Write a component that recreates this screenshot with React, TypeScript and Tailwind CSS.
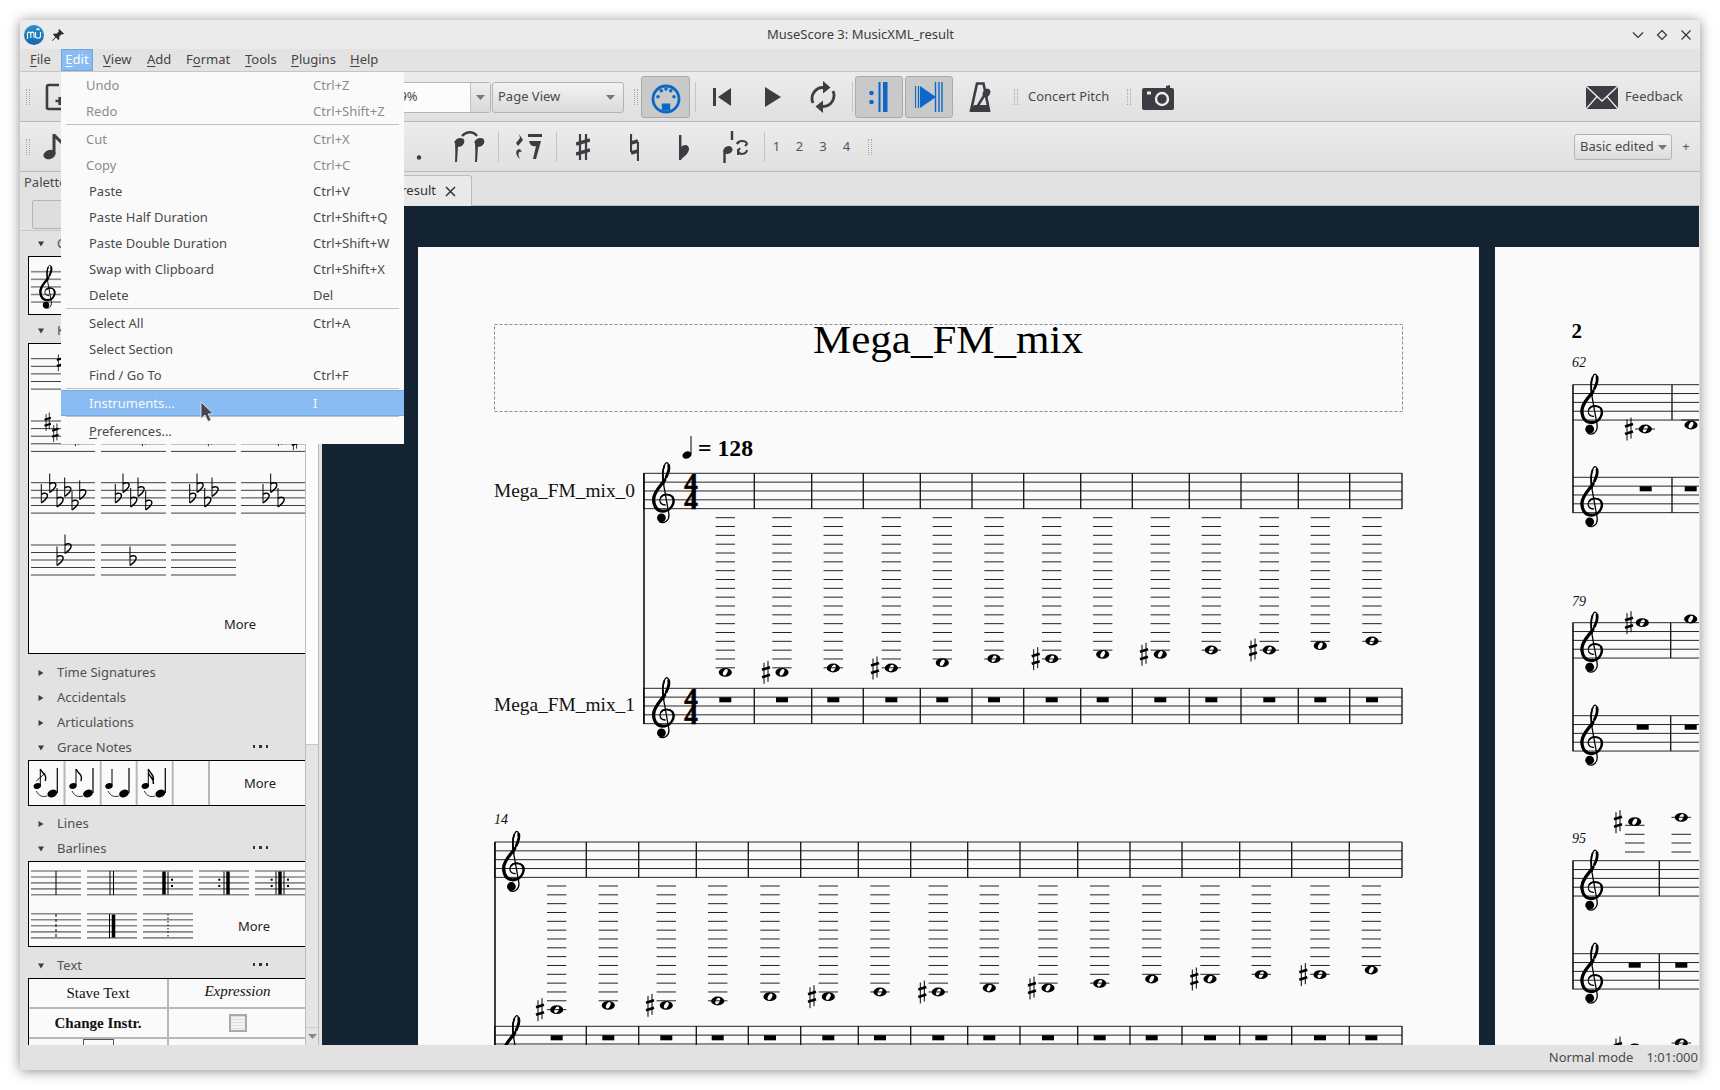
import React from "react";

const INK = "#3b3d43";
const BLUE = "#0b68c6";
const SP = 8.84;
const SERIF = "font-['Liberation_Serif',serif]";

function Clef({ x, y, s = 1 }: { x: number; y: number; s?: number }) {
  return (
    <g transform={`translate(${x} ${y}) scale(${s})`} fill="none" stroke="#000" strokeLinecap="round">
      <path strokeWidth="1.3" d="M13.5 44 C9 44 7 40 9 36.5 C11 33 18 32 21 36 C24 41 20 49 13 50 C6 51 1 46 1.2 38 C1.5 30 9 25 13 19 C16 14 18.5 9 17 4 C16 0.5 14 1 12.5 5 C10.5 10 11 17 12 24 L17 52 C18.5 60 12 63 8 61" />
      <path strokeWidth="3.2" d="M13 50 C6 51 1.8 46 2 38 C2.2 30.5 9 25 13 19" />
      <path strokeWidth="2.8" d="M14.5 16 C16.5 12 18 8.5 17 4.5" />
      <path strokeWidth="2.4" d="M21 36.5 C23.5 41 20 49 13.5 50" />
      <path strokeWidth="1.8" d="M12 23 C11 17 10.5 10 12.5 5 M9.5 36 C11 33.5 17 32.5 20.5 35.5" />
      <circle cx="9.7" cy="56.8" r="4.4" fill="#000" stroke="none" />
    </g>
  );
}

function Staff({ x1, x2, y, sp = SP, c = "#262626", w = 1 }: { x1: number; x2: number; y: number; sp?: number; c?: string; w?: number }) {
  return (
    <g stroke={c} strokeWidth={w}>
      {[0, 1, 2, 3, 4].map((i) => (
        <line key={i} x1={x1} x2={x2} y1={y + i * sp} y2={y + i * sp} />
      ))}
    </g>
  );
}

function Sharp({ x, y, s = 1 }: { x: number; y: number; s?: number }) {
  return (
    <g transform={`translate(${x} ${y}) scale(${s})`} stroke="#000">
      <line x1="-2" x2="-2" y1="-9.5" y2="11.5" strokeWidth="1" />
      <line x1="2" x2="2" y1="-11.5" y2="9.5" strokeWidth="1" />
      <line x1="-4" x2="4" y1="-2.5" y2="-5" strokeWidth="2.6" />
      <line x1="-4" x2="4" y1="5" y2="2.5" strokeWidth="2.6" />
    </g>
  );
}

function Flat({ x, y }: { x: number; y: number }) {
  return (
    <g transform={`translate(${x} ${y})`} fill="none" stroke="#000">
      <line x1="0" x2="0" y1="-13" y2="6" strokeWidth="1" />
      <path strokeWidth="1.4" d="M0 -2.5 C3 -5 6.8 -3.5 6 -0.5 C5.2 2 2 4.5 0 6" />
    </g>
  );
}

function Whole({ x, y }: { x: number; y: number }) {
  return (
    <path
      transform={`translate(${x} ${y})`}
      fill="#000"
      fillRule="evenodd"
      d="M-6.6 0 A6.6 4.4 0 1 1 6.6 0 A6.6 4.4 0 1 1 -6.6 0 Z M-1.7 2.95 A3.4 1.9 -60 1 1 1.7 -2.95 A3.4 1.9 -60 1 1 -1.7 2.95 Z"
    />
  );
}

type N = [number, number, number?];

function Bars({ xs, y1, y2 }: { xs: number[]; y1: number; y2: number }) {
  return (
    <g stroke="#111" strokeWidth="1.3">
      {xs.map((x) => (
        <line key={x} x1={x} x2={x} y1={y1} y2={y2} />
      ))}
    </g>
  );
}

function LedgerNote({ n, top }: { n: N; top: number }) {
  const [x, y, sharp] = n;
  const lines: number[] = [];
  for (let k = 0; top + k * 8.83 <= y + 1; k++) lines.push(top + k * 8.83);
  return (
    <g>
      {lines.map((ly) => (
        <line key={ly} x1={x - 9.7} x2={x + 9.7} y1={ly} y2={ly} stroke="#222" strokeWidth="1" />
      ))}
      <Whole x={x} y={y} />
      {sharp ? <Sharp x={sharp} y={y} /> : null}
    </g>
  );
}

function Rest({ x, y }: { x: number; y: number }) {
  return <rect x={x - 6} y={y} width="12" height="5" fill="#000" />;
}

const sys1Bars = [643.7, 754.3, 811.7, 863.3, 920.3, 972, 1023.7, 1080.7, 1132.3, 1189.3, 1241, 1298.3, 1349.7, 1402];
const sys1Notes: N[] = [
  [725.3, 672.3], [782, 672.3, 766], [833.3, 668], [891.3, 668, 875], [942.3, 662.7], [994, 658.7],
  [1051.7, 658.7, 1035.7], [1102.7, 654.3], [1160.3, 654.3, 1144], [1211.3, 650], [1269.3, 650, 1253], [1320.3, 645.7], [1372, 641],
];
const sys2Bars = [494.7, 586.3, 638.7, 696.3, 748.3, 800.7, 858.3, 910.7, 967.7, 1020, 1077.7, 1130, 1182, 1239.7, 1291.7, 1349.3, 1402];
const sys2Notes: N[] = [
  [556.7, 1009.7, 540], [608.3, 1005.3], [666.3, 1005.3, 650], [717.7, 1001], [770, 996.7], [828.3, 996.7, 812], [880, 992], [938.3, 992, 922.3],
  [989.3, 988], [1048, 988, 1032], [1099.7, 983.3], [1151.7, 979], [1210, 979, 1194.3], [1261.3, 974.7], [1320, 974.7, 1303.3], [1371.3, 970],
];

function PageOne() {
  return (
    <svg viewBox="418 247 1061 800" className="block w-[1061px] h-[800px]">
      <rect x="494.5" y="324.5" width="908" height="87" fill="none" stroke="#8c8c8c" strokeWidth="1" strokeDasharray="3 2" />
      <text x="948" y="353" textAnchor="middle" fontSize="40" fill="#000" textLength="270" lengthAdjust="spacingAndGlyphs" className={SERIF}>Mega_FM_mix</text>

      <ellipse cx="687" cy="455" rx="4.7" ry="3.6" transform="rotate(-22 687 455)" fill="#000" />
      <line x1="691" x2="691" y1="436" y2="454" stroke="#000" strokeWidth="1" />
      <text x="698" y="456" fontSize="23" fontWeight="700" fill="#000" textLength="55" lengthAdjust="spacingAndGlyphs" className={SERIF}>= 128</text>

      <text x="494" y="497" fontSize="19" fill="#111" textLength="141" lengthAdjust="spacingAndGlyphs" className={SERIF}>Mega_FM_mix_0</text>
      <text x="494" y="711" fontSize="19" fill="#111" textLength="141" lengthAdjust="spacingAndGlyphs" className={SERIF}>Mega_FM_mix_1</text>

      <Staff x1={643.7} x2={1402} y={473.3} />
      <Staff x1={643.7} x2={1402} y={688.3} />
      <Bars xs={sys1Bars} y1={473} y2={509} />
      <Bars xs={sys1Bars} y1={688} y2={724} />
      <line x1="644" x2="644" y1="473" y2="724" stroke="#111" strokeWidth="1.6" />
      <Clef x={651.7} y={461} />
      <Clef x={651.7} y={676} />
      {[491.5, 509, 706.5, 724].map((y) => (
        <text key={y} x="691" y={y} textAnchor="middle" fontSize="27" fontWeight="700" fill="#000" stroke="#000" strokeWidth="0.7" className={SERIF}>4</text>
      ))}
      {sys1Notes.map((n) => (
        <g key={n[0]}>
          <LedgerNote n={n} top={517.7} />
          <Rest x={n[0]} y={697.3} />
        </g>
      ))}

      <text x="494" y="824" fontSize="14" fontStyle="italic" fill="#111" className={SERIF}>14</text>
      <Staff x1={494.7} x2={1402} y={842} />
      <Staff x1={494.7} x2={1402} y={1026.3} />
      <Bars xs={sys2Bars} y1={842} y2={877.5} />
      <Bars xs={sys2Bars} y1={1026} y2={1047} />
      <line x1="495" x2="495" y1="842" y2="1047" stroke="#111" strokeWidth="1.6" />
      <Clef x={501.7} y={829.7} />
      <Clef x={501.7} y={1014} />
      {sys2Notes.map((n) => (
        <g key={n[0]}>
          <LedgerNote n={n} top={886} />
          <Rest x={n[0]} y={1035.3} />
        </g>
      ))}
    </svg>
  );
}

function MiniSystem({ t1, t2, bar, num, numY, rests }: { t1: number; t2: number; bar: number; num: string; numY: number; rests: number[] }) {
  return (
    <g>
      <text x="1572" y={numY} fontSize="14" fontStyle="italic" fill="#111" className={SERIF}>{num}</text>
      <Staff x1={1572.5} x2={1700} y={t1} />
      <Staff x1={1572.5} x2={1700} y={t2} />
      <Bars xs={[bar]} y1={t1} y2={t1 + 35.4} />
      <Bars xs={[bar]} y1={t2} y2={t2 + 35.4} />
      <line x1="1573" x2="1573" y1={t1} y2={t2 + 35.4} stroke="#111" strokeWidth="1.6" />
      <Clef x={1580} y={t1 - 12.3} />
      <Clef x={1580} y={t2 - 12.3} />
      {rests.map((x) => (
        <Rest key={x} x={x} y={t2 + 9} />
      ))}
    </g>
  );
}

function PageTwo() {
  return (
    <svg viewBox="1495 247 204 800" className="block w-[204px] h-[800px]">
      <text x="1571.5" y="338" fontSize="21" fontWeight="700" fill="#000" className={SERIF}>2</text>
      <MiniSystem t1={384.7} t2={477.3} bar={1672} num="62" numY={367} rests={[1645.7, 1690.7]} />
      <line x1="1635" x2="1655" y1="429" y2="429" stroke="#222" />
      <Whole x={1645.3} y={429} />
      <Sharp x={1629} y={429} />
      <line x1="1681" x2="1700" y1="420" y2="420" stroke="#222" />
      <Whole x={1691} y={425} />

      <MiniSystem t1={622.7} t2={715.7} bar={1670.7} num="79" numY={605.7} rests={[1642.7, 1690.7]} />
      <Whole x={1642.3} y={622.7} />
      <Sharp x={1629} y={622.7} />
      <Whole x={1690.7} y={619} />

      <MiniSystem t1={860.7} t2={953.7} bar={1659.3} num="95" numY={843.3} rests={[1634.7, 1681.3]} />
      {[825.3, 834.3, 843, 852].map((y) => (
        <line key={y} x1="1625" x2="1644.5" y1={y} y2={y} stroke="#222" />
      ))}
      {[817.3, 834.3, 843, 852].map((y) => (
        <line key={y} x1="1671.5" x2="1691" y1={y} y2={y} stroke="#222" />
      ))}
      <Whole x={1634.7} y={821.7} />
      <Sharp x={1618} y={821.7} />
      <Whole x={1681.3} y={817.3} />
      <Whole x={1634.7} y={1048} />
      <Sharp x={1618} y={1048} />
      <Whole x={1681.3} y={1043} />
      <line x1="1671.5" x2="1691" y1="1043" y2="1043" stroke="#222" />
    </svg>
  );
}

function Grip() {
  return <div className="w-[4px] h-[16px] border-x border-dotted border-[#a8a8a8] shrink-0" />;
}
function Sep() {
  return <div className="w-px h-[30px] bg-[#c4c4c4] shrink-0" />;
}
function Caret({ c = "#777" }: { c?: string }) {
  return (
    <svg width="9" height="5" viewBox="0 0 9 5" className="shrink-0">
      <path d="M0 0H9L4.5 5Z" fill={c} />
    </svg>
  );
}

function U({ pre = "", k, post }: { pre?: string; k: string; post: string }) {
  return (
    <span>
      {pre}
      <span className="underline underline-offset-[2px]">{k}</span>
      {post}
    </span>
  );
}

function TitleBar() {
  return (
    <div className="h-[29px] bg-[#ebebeb] flex items-center relative shrink-0">
      <svg width="20" height="20" viewBox="0 0 20 20" className="ml-[4px] shrink-0">
        <defs>
          <linearGradient id="mu" x1="0" y1="0" x2="0" y2="1">
            <stop offset="0" stopColor="#2b8fcf" />
            <stop offset="1" stopColor="#1668a8" />
          </linearGradient>
        </defs>
        <circle cx="10" cy="10" r="10" fill="url(#mu)" />
        <path d="M3.5 14V8.8C3.5 6.5 6.8 6.5 6.8 8.8V13M6.8 8.8C6.8 6.5 10 6.5 10 8.8V13" fill="none" stroke="#fff" strokeWidth="1.1" />
        <path d="M11.5 7V11C11.5 14 16.5 14 16.5 11V7M12.5 5L14 3.5L15.5 5" fill="none" stroke="#fff" strokeWidth="1.1" />
      </svg>
      <svg width="14" height="14" viewBox="0 0 14 14" className="ml-[7px] shrink-0">
        <path d="M8.2 1L13 5.8L11.8 6.6L10.6 6.2L8.2 8.6L8.4 11L7.4 12L5 9.6L1.5 13L1 12.5L4.4 9L2 6.6L3 5.6L5.4 5.8L7.8 3.4L7.4 2.2Z" fill="#2c2c2c" />
      </svg>
      <div className="flex-1 text-center text-[13px] text-[#3c3c3c] pl-[24px]">MuseScore 3: MusicXML_result</div>
      <div className="flex items-center gap-[12px] pr-[8px]">
        <svg width="12" height="12" viewBox="0 0 12 12"><path d="M1 3.5L6 8.5L11 3.5" fill="none" stroke="#333" strokeWidth="1.2" /></svg>
        <svg width="12" height="12" viewBox="0 0 12 12"><path d="M6 1.5L10.5 6L6 10.5L1.5 6Z" fill="none" stroke="#333" strokeWidth="1.2" /></svg>
        <svg width="12" height="12" viewBox="0 0 12 12"><path d="M1.5 1.5L10.5 10.5M10.5 1.5L1.5 10.5" fill="none" stroke="#333" strokeWidth="1.2" /></svg>
      </div>
    </div>
  );
}

function MenuBar() {
  return (
    <div className="h-[23px] bg-[#e3e3e3] border-b border-[#c6c6c6] flex items-center text-[13px] text-[#444] shrink-0">
      <div className="ml-[10px] w-[31px]"><U k="F" post="ile" /></div>
      <div className="w-[32px] h-[22px] bg-[#88bcf3] border border-[#6ea6de] text-white flex items-center justify-center"><U k="E" post="dit" /></div>
      <div className="ml-[10px] w-[44px]"><U k="V" post="iew" /></div>
      <div className="w-[39px]"><U k="A" post="dd" /></div>
      <div className="w-[59px]"><U pre="F" k="o" post="rmat" /></div>
      <div className="w-[46px]"><U k="T" post="ools" /></div>
      <div className="w-[59px]"><U k="P" post="lugins" /></div>
      <div><U k="H" post="elp" /></div>
    </div>
  );
}

function IconDoc() {
  return (
    <svg width="20" height="30" viewBox="0 0 20 30" className="shrink-0">
      <path d="M14 3H3.5A1.5 1.5 0 0 0 2 4.5V25.5A1.5 1.5 0 0 0 3.5 27H18" fill="none" stroke={INK} strokeWidth="2.6" />
      <path d="M10.5 19H19M14.7 15V23" stroke={INK} strokeWidth="2.6" />
    </svg>
  );
}
function IconMidi() {
  return (
    <svg width="32" height="32" viewBox="-16 -16 32 32" className="shrink-0 mt-[3px]">
      <circle r="13" fill="none" stroke={BLUE} strokeWidth="2.8" />
      <rect x="-4.2" y="4.5" width="8.4" height="7" fill={BLUE} />
      {[[-8, -2.3], [-4.7, -8.3], [0, -10], [4.7, -8.3], [8, -2.3]].map(([x, y]) => (
        <circle key={x} cx={x} cy={y} r="1.8" fill={BLUE} />
      ))}
    </svg>
  );
}
function IconRewind() {
  return (
    <svg width="18" height="18" viewBox="0 0 18 18" className="shrink-0">
      <rect x="0" y="0" width="3" height="18" fill={INK} />
      <path d="M5 9L18 0V18Z" fill={INK} />
    </svg>
  );
}
function IconPlay() {
  return (
    <svg width="16" height="20" viewBox="0 0 16 20" className="shrink-0">
      <path d="M0 0L16 10L0 20Z" fill={INK} />
    </svg>
  );
}
function IconLoop() {
  return (
    <svg width="26" height="32" viewBox="0 0 26 32" className="shrink-0">
      <path d="M3 22A11 11 0 0 1 13 6.5H15M23 10A11 11 0 0 1 13 25.5H11" fill="none" stroke={INK} strokeWidth="2.8" />
      <path d="M13 0L20.5 6.5L13 12.5ZM13 19.5L5.5 25.5L13 32Z" fill={INK} />
    </svg>
  );
}
function IconRepeat() {
  return (
    <svg width="20" height="30" viewBox="0 0 20 30" className="shrink-0">
      <circle cx="2.5" cy="11" r="2.3" fill={BLUE} />
      <circle cx="2.5" cy="20" r="2.3" fill={BLUE} />
      <rect x="9.5" y="0" width="2" height="30" fill={BLUE} />
      <rect x="14" y="0" width="4.5" height="30" fill={BLUE} />
    </svg>
  );
}
function IconNext() {
  return (
    <svg width="28" height="30" viewBox="0 0 28 30" className="shrink-0">
      <path d="M0.5 4V26M3.5 4V26" stroke={BLUE} strokeWidth="1.2" />
      <path d="M5 4L21 15L5 26Z" fill={BLUE} />
      <path d="M20.5 0V30M24 0V30M27 0V30" stroke={BLUE} strokeWidth="1.4" />
    </svg>
  );
}
function IconMetro() {
  return (
    <svg width="23" height="30" viewBox="0 0 23 30" className="shrink-0">
      <path d="M8 1.5H14.5L20 28.5H2Z" fill="none" stroke={INK} strokeWidth="2.6" />
      <path d="M5 23H18L21 30H1Z" fill={INK} />
      <path d="M8 25L18 9" stroke={INK} strokeWidth="2.4" />
      <ellipse cx="17.5" cy="11" rx="3.5" ry="4.5" fill={INK} transform="rotate(30 17.5 11)" />
    </svg>
  );
}
function IconCamera() {
  return (
    <svg width="32" height="25" viewBox="0 0 32 25" className="shrink-0">
      <path d="M2 3H24V1L28 0V3H30A2 2 0 0 1 32 5V23A2 2 0 0 1 30 25H2A2 2 0 0 1 0 23V5A2 2 0 0 1 2 3Z" fill={INK} />
      <rect x="5" y="6.5" width="4" height="3" fill="#eee" />
      <circle cx="20" cy="14" r="6" fill="none" stroke="#eee" strokeWidth="2.4" />
    </svg>
  );
}
function IconMail() {
  return (
    <svg width="32" height="23" viewBox="0 0 32 23" className="shrink-0">
      <rect width="32" height="23" fill={INK} />
      <path d="M0 0L16 15L32 0M0 23L11 10.5M32 23L21 10.5" fill="none" stroke="#efefef" strokeWidth="1.3" />
    </svg>
  );
}

function Toolbar1() {
  return (
    <div className="h-[50px] pt-[1px] bg-gradient-to-b from-[#ececec] to-[#e0e0e0] border-b border-[#b9b9b9] flex items-center text-[13px] text-[#4a4a4a] shrink-0">
      <div className="ml-[6px]"><Grip /></div>
      <div className="ml-[15px]"><IconDoc /></div>
      <div className="ml-[320px] w-[106px] h-[31px] bg-[#fcfcfc] border border-[#b4b4b4] rounded-[3px] flex items-center shrink-0">
        <div className="flex-1 pl-[6px]">99%</div>
        <div className="w-[20px] h-full border-l border-[#c2c2c2] bg-gradient-to-b from-[#eeeeee] to-[#d8d8d8] flex items-center justify-center"><Caret /></div>
      </div>
      <div className="ml-px w-[132px] h-[31px] bg-gradient-to-b from-[#f4f4f4] to-[#dadada] border border-[#b4b4b4] rounded-[3px] flex items-center justify-between pl-[5px] pr-[8px] shrink-0">
        <span>Page View</span>
        <Caret />
      </div>
      <div className="ml-[10px]"><Grip /></div>
      <div className="ml-[3px] w-[49px] h-[42px] bg-[#c9c9c9] border border-[#ababab] rounded-[3px] flex items-center justify-center shrink-0"><IconMidi /></div>
      <div className="ml-[5px]"><Sep /></div>
      <div className="w-[51px] flex justify-center shrink-0"><IconRewind /></div>
      <div className="w-[51px] flex justify-center shrink-0"><IconPlay /></div>
      <div className="w-[49px] flex justify-center shrink-0"><IconLoop /></div>
      <div className="ml-[5px]"><Sep /></div>
      <div className="ml-[2px] w-[48px] h-[42px] bg-[#c9c9c9] border border-[#ababab] rounded-[3px] flex items-center justify-center shrink-0"><IconRepeat /></div>
      <div className="ml-[2px] w-[48px] h-[42px] bg-[#c9c9c9] border border-[#ababab] rounded-[3px] flex items-center justify-center shrink-0"><IconNext /></div>
      <div className="w-[54px] flex justify-center shrink-0"><IconMetro /></div>
      <div className="ml-[7px]"><Grip /></div>
      <div className="ml-[10px] w-[82px] whitespace-nowrap shrink-0">Concert Pitch</div>
      <div className="ml-[17px]"><Grip /></div>
      <div className="w-[54px] flex justify-center shrink-0"><IconCamera /></div>
      <div className="flex-1" />
      <IconMail />
      <div className="ml-[7px] mr-[17px]">Feedback</div>
    </div>
  );
}

function Toolbar2() {
  return (
    <div className="h-[50px] pt-[1px] bg-gradient-to-b from-[#ececec] to-[#e0e0e0] border-b border-[#b9b9b9] flex items-center text-[13px] text-[#555] shrink-0">
      <div className="ml-[6px]"><Grip /></div>
      <svg width="22" height="26" viewBox="0 0 22 26" className="ml-[12px] shrink-0">
        <ellipse cx="7.5" cy="20.5" rx="6.2" ry="4.6" fill={INK} transform="rotate(-20 7.5 20.5)" />
        <path d="M12 20V1L22 11" fill="none" stroke={INK} strokeWidth="3" />
      </svg>
      <div className="ml-[336px] w-[38px] flex justify-center shrink-0">
        <svg width="6" height="28" viewBox="0 0 6 28"><circle cx="3" cy="24.5" r="2.2" fill={INK} /></svg>
      </div>
      <div className="w-[60px] flex justify-center shrink-0">
        <svg width="38" height="32" viewBox="0 0 38 32">
          <path d="M6 12A6 6 0 0 1 12 8C14 8 15 10 14 12C13 14 10 15 8 15L7 31M26 12A6 6 0 0 1 32 8C34 8 35 10 34 12C33 14 30 15 28 15L27 31" fill={INK} stroke={INK} strokeWidth="2" />
          <path d="M13 5C18 0 24 0 28 5" fill="none" stroke={INK} strokeWidth="2.4" />
        </svg>
      </div>
      <Sep />
      <div className="w-[57px] flex justify-center shrink-0">
        <svg width="28" height="28" viewBox="0 0 28 28">
          <path d="M5 1L9 7L4 13L8 19C5 18 3 20 6 26C0 21 2 16 6 16L2 10L6 5Z" fill={INK} />
          <rect x="14" y="1" width="14" height="3" fill={INK} />
          <path d="M15 8H27L22 26H19L22 13C20 14 16 13 15 8Z" fill={INK} />
        </svg>
      </div>
      <Sep />
      <div className="w-[52px] flex justify-center shrink-0">
        <svg width="14" height="26" viewBox="0 0 14 26">
          <path d="M4 0V26M10 0V26" stroke={INK} strokeWidth="2.2" />
          <path d="M0 10L14 6M0 20L14 16" stroke={INK} strokeWidth="3.4" />
        </svg>
      </div>
      <div className="w-[50px] flex justify-center shrink-0">
        <svg width="9" height="27" viewBox="0 0 9 27">
          <path d="M1 0V18M8 8V27" stroke={INK} strokeWidth="2.2" />
          <path d="M1 9L8 7M1 19L8 17" stroke={INK} strokeWidth="3.4" />
        </svg>
      </div>
      <div className="w-[51px] flex justify-center shrink-0">
        <svg width="11" height="25" viewBox="0 0 11 25">
          <path d="M1.2 0V25" stroke={INK} strokeWidth="2.4" />
          <path d="M1 13C4 9 10 9 10 14C10 18 5 22 1 25Z" fill={INK} />
        </svg>
      </div>
      <div className="w-[51px] flex justify-center shrink-0">
        <svg width="26" height="32" viewBox="0 0 26 32">
          <ellipse cx="5" cy="19" rx="4.6" ry="3.8" fill={INK} transform="rotate(-20 5 19)" />
          <path d="M1.5 19V32M9 0V9" stroke={INK} strokeWidth="2.4" />
          <path d="M14 13C15 9 23 9 24 13L22 15M17 10L14 13M24 19C23 24 16 24 15 20L17 17M15 24V18" fill="none" stroke={INK} strokeWidth="2" />
        </svg>
      </div>
      <div className="ml-[3px]"><Sep /></div>
      <div className="w-[23px] text-center shrink-0">1</div>
      <div className="w-[23px] text-center shrink-0">2</div>
      <div className="w-[24px] text-center shrink-0">3</div>
      <div className="w-[23px] text-center shrink-0">4</div>
      <div className="ml-[10px]"><Grip /></div>
      <div className="flex-1" />
      <div className="w-[98px] h-[26px] bg-gradient-to-b from-[#f3f3f3] to-[#dcdcdc] border border-[#b4b4b4] rounded-[3px] flex items-center justify-between pl-[5px] pr-[4px] whitespace-nowrap text-[#4a4a4a] shrink-0">
        <span>Basic edited</span>
        <Caret />
      </div>
      <div className="w-[28px] text-center shrink-0">+</div>
    </div>
  );
}

function Arrow({ open }: { open: boolean }) {
  return (
    <svg width="6" height="6" viewBox="0 0 6 6" className="shrink-0">
      {open ? <path d="M0 0.5H6L3 5.5Z" fill="#3d3d3d" /> : <path d="M0.5 0L5.5 3L0.5 6Z" fill="#3d3d3d" />}
    </svg>
  );
}

function Row({ label, open = false, dots = false }: { label: string; open?: boolean; dots?: boolean }) {
  return (
    <div className="h-[25px] flex items-center pl-[18px] pr-[37px] shrink-0">
      <Arrow open={open} />
      <span className="ml-[13px] flex-1 text-[13px] text-[#505050] whitespace-nowrap">{label}</span>
      {dots ? (
        <span className="flex gap-[4px] mb-[2px]">
          <i className="block w-[2.5px] h-[2.5px] bg-[#333]" />
          <i className="block w-[2.5px] h-[2.5px] bg-[#333]" />
          <i className="block w-[2.5px] h-[2.5px] bg-[#333]" />
        </span>
      ) : null}
    </div>
  );
}

const box = "ml-[8px] w-[277px] bg-[#fafafa] border-y border-l border-black shrink-0 overflow-hidden";

const flatX = [
  [41.3, 49.7, 57, 64.7, 72, 79.7],
  [115.3, 123, 130.7, 138, 145.7],
  [189.7, 197, 204.7, 212],
  [263, 270.7, 278],
];
const flatY = [497, 486.5, 501, 490.5, 504, 493.5];

function KeyBox() {
  const cells = [[31, 95], [101, 166], [171, 236], [241, 305]];
  return (
    <div className={`${box} h-[311px]`}>
      <svg viewBox="29 344 276 309" className="block w-[276px] h-[309px]">
        {[358.7, 421, 482.7].map((y) =>
          cells.map(([a, b]) => <Staff key={`${y}${a}`} x1={a} x2={b} y={y} sp={7.6} c="#3e3e3e" />)
        )}
        {cells.slice(0, 3).map(([a, b]) => (
          <Staff key={a} x1={a} x2={b} y={545} sp={7.5} c="#3e3e3e" />
        ))}
        <Sharp x={60} y={362} s={0.8} />
        <Sharp x={47.7} y={421.7} s={0.8} />
        <Sharp x={55.3} y={432.7} s={0.8} />
        {[77, 144, 210, 280].map((x) => (
          <Sharp key={x} x={x} y={437} s={0.8} />
        ))}
        <Sharp x={295} y={441} s={0.8} />
        {flatX.map((row, i) => row.map((x, j) => <Flat key={`${i}${j}`} x={x} y={flatY[j]} />))}
        <Flat x={57} y={559.5} />
        <Flat x={65} y={547.5} />
        <Flat x={130} y={559.5} />
        <text x="240" y="629" textAnchor="middle" fontSize="13" fill="#222" className="font-['Noto_Sans',sans-serif]">More</text>
      </svg>
    </div>
  );
}

function GraceNote({ x, kind }: { x: number; kind: number }) {
  return (
    <g>
      <ellipse cx={x} cy="785" rx="3.8" ry="2.8" fill="#000" transform={`rotate(-20 ${x} 785)`} />
      <line x1={x + 3} x2={x + 3} y1="768" y2="784" stroke="#000" strokeWidth="1" />
      {kind === 0 || kind === 1 ? <path d={`M${x + 3} 768C${x + 5} 773 ${x + 10} 773 ${x + 8} 780`} fill="none" stroke="#000" strokeWidth="1.4" /> : null}
      {kind === 3 ? <path d={`M${x + 3} 768C${x + 5} 773 ${x + 9} 773 ${x + 8} 779M${x + 3} 772C${x + 5} 777 ${x + 9} 777 ${x + 8} 783`} fill="none" stroke="#000" strokeWidth="1.4" /> : null}
      {kind === 0 ? <line x1={x - 1} x2={x + 8} y1="780" y2="772" stroke="#000" strokeWidth="0.9" /> : null}
      <ellipse cx={x + 15} cy="792.5" rx="5" ry="3.8" fill="#000" transform={`rotate(-20 ${x + 15} 792.5)`} />
      <line x1={x + 20} x2={x + 20} y1="767" y2="792" stroke="#000" strokeWidth="1.2" />
      <path d={`M${x - 1} 790C${x + 2} 796 ${x + 6} 796 ${x + 10} 795`} fill="none" stroke="#000" strokeWidth="0.8" />
    </g>
  );
}

function GraceBox() {
  return (
    <div className={`${box} h-[46px] relative`}>
      <svg viewBox="29 760 276 44" className="block w-[276px] h-[44px]">
        {[64.5, 100.7, 136.7, 172.7, 209].map((x) => (
          <line key={x} x1={x} x2={x} y1="760" y2="804" stroke="#b8b8b8" strokeWidth="2" />
        ))}
        {[37.3, 73, 109, 145.3].map((x, i) => (
          <GraceNote key={x} x={x} kind={i} />
        ))}
        <text x="260" y="787" textAnchor="middle" fontSize="13" fill="#222" className="font-['Noto_Sans',sans-serif]">More</text>
      </svg>
    </div>
  );
}

function BarlinesBox() {
  const r1 = [[31, 81], [87, 137], [143, 193], [199, 249], [255, 305]];
  const r2 = r1.slice(0, 3);
  const thick = (x: number, y1: number, w = 3.5) => <rect x={x - w / 2} y={y1} width={w} height="23" fill="#000" />;
  const dots = (x: number) => (
    <g fill="#000">
      <rect x={x - 1} y="877.7" width="2" height="2" />
      <rect x={x - 1} y="884" width="2" height="2" />
    </g>
  );
  return (
    <div className={`${box} h-[86px]`}>
      <svg viewBox="29 861 276 84" className="block w-[276px] h-[84px]">
        {r1.map(([a, b]) => <Staff key={a} x1={a} x2={b} y={870} sp={5.95} c="#888" w={1.6} />)}
        {r2.map(([a, b]) => <Staff key={a} x1={a} x2={b} y={912.7} sp={6.05} c="#888" w={1.6} />)}
        <line x1="56" x2="56" y1="870" y2="894" stroke="#000" strokeWidth="1" />
        <path d="M110 870V894M113.5 870V894" stroke="#000" strokeWidth="1" />
        {thick(164, 870.5)}
        <line x1="168" x2="168" y1="870.5" y2="893.5" stroke="#000" />
        {dots(172)}
        {dots(219.3)}
        <line x1="224" x2="224" y1="870.5" y2="893.5" stroke="#000" />
        {thick(228, 870.5)}
        {dots(271.7)}
        <line x1="276" x2="276" y1="870.5" y2="893.5" stroke="#000" />
        {thick(280, 870.5)}
        <line x1="284" x2="284" y1="870.5" y2="893.5" stroke="#000" />
        {dots(288)}
        <line x1="56" x2="56" y1="913" y2="937" stroke="#000" strokeDasharray="3 2" />
        <line x1="109.5" x2="109.5" y1="913" y2="937" stroke="#000" />
        {thick(113.5, 913.5)}
        <line x1="168" x2="168" y1="913" y2="937" stroke="#000" strokeDasharray="1.5 2" />
        <text x="254" y="930" textAnchor="middle" fontSize="13" fill="#222" className="font-['Noto_Sans',sans-serif]">More</text>
      </svg>
    </div>
  );
}

function TextBox() {
  return (
    <div className={`${box} h-[100px] grid grid-cols-[140px_137px] grid-rows-[30px_30px_40px] text-[#111] ${SERIF}`}>
      <div className="border-r-2 border-b-2 border-[#b8b8b8] flex items-center justify-center text-[15px]">Stave Text</div>
      <div className="border-b-2 border-[#b8b8b8] flex items-center justify-center text-[15px] italic pb-[3px]">Expression</div>
      <div className="border-r-2 border-b-2 border-[#b8b8b8] flex items-center justify-center text-[15px] font-bold">Change Instr.</div>
      <div className="border-b-2 border-[#b8b8b8] flex items-center justify-center">
        <div className="w-[18px] h-[18px] border-2 border-[#a9a9a9] bg-[repeating-linear-gradient(#ddd_0,#ddd_1px,#f4f4f4_1px,#f4f4f4_3px)]" />
      </div>
      <div className="border-r-2 border-[#b8b8b8] flex justify-center">
        <div className="w-[31px] h-[12px] border border-[#555]" />
      </div>
      <div />
    </div>
  );
}

function Palette() {
  return (
    <aside className="w-[302px] h-full flex shrink-0 bg-[#e2e2e2] overflow-hidden">
      <div className="w-[285px] flex flex-col shrink-0">
        <div className="h-[22px] flex items-center pl-[4px] text-[13px] text-[#4a4a4a] shrink-0">Palettes</div>
        <div className="h-[37px] border-b border-[#c8c8c8] pl-[12px] pt-[6px] shrink-0">
          <div className="w-[260px] h-[29px] bg-[#dedede] border border-[#b4b4b4] rounded-[2px]" />
        </div>
        <Row label="Clefs" open />
        <div className={`${box} h-[59px]`}>
          <svg viewBox="29 257 276 57" className="block w-[276px] h-[57px]">
            <Staff x1={31} x2={62} y={271.7} sp={7.6} c="#888" w={1.6} />
            <Clef x={39} y={264} s={0.72} />
          </svg>
        </div>
        <div className="h-[3px] shrink-0" />
        <Row label="Key Signatures" open />
        <KeyBox />
        <div className="h-[6px] shrink-0" />
        <Row label="Time Signatures" />
        <Row label="Accidentals" />
        <Row label="Articulations" />
        <Row label="Grace Notes" open dots />
        <GraceBox />
        <div className="h-[5px] shrink-0" />
        <Row label="Lines" />
        <Row label="Barlines" open dots />
        <BarlinesBox />
        <div className="h-[6px] shrink-0" />
        <Row label="Text" open dots />
        <TextBox />
      </div>
      <div className="w-[14px] border-l border-r border-[#bdbdbd] flex flex-col shrink-0">
        <div className="h-[573px] bg-[#fcfcfc] border-b border-[#c4c4c4] shrink-0" />
        <div className="flex-1 bg-[#e4e4e4]" />
        <div className="h-[18px] flex items-center justify-center bg-[#e4e4e4] border-t border-[#cfcfcf] shrink-0"><Caret c="#8a8a8a" /></div>
      </div>
    </aside>
  );
}

type Item = { t?: string; s?: string; d?: boolean; sep?: boolean; on?: boolean; u?: boolean };
const items: Item[] = [
  { t: "Undo", s: "Ctrl+Z", d: true },
  { t: "Redo", s: "Ctrl+Shift+Z", d: true },
  { sep: true },
  { t: "Cut", s: "Ctrl+X", d: true },
  { t: "Copy", s: "Ctrl+C", d: true },
  { t: "Paste", s: "Ctrl+V" },
  { t: "Paste Half Duration", s: "Ctrl+Shift+Q" },
  { t: "Paste Double Duration", s: "Ctrl+Shift+W" },
  { t: "Swap with Clipboard", s: "Ctrl+Shift+X" },
  { t: "Delete", s: "Del" },
  { sep: true },
  { t: "Select All", s: "Ctrl+A" },
  { t: "Select Section" },
  { t: "Find / Go To", s: "Ctrl+F" },
  { sep: true },
  { t: "Instruments...", s: "I", on: true },
  { sep: true },
  { t: "Preferences...", u: true },
];

function Menu() {
  return (
    <div className="absolute left-[41px] top-[52px] w-[343px] bg-[#fafafa] flex flex-col text-[13px] z-10">
      {items.map((it, i) =>
        it.sep ? (
          <div key={i} className="h-[2px] shrink-0 pl-[5px] pr-[5px]">
            <div className="h-px bg-[#bfbfbf]" />
          </div>
        ) : (
          <div
            key={i}
            className={`h-[26px] pt-[2px] flex items-center shrink-0 ${it.on ? "bg-[#88bcf3] border-y border-[#74abe4] text-[#f8f8f8]" : it.d ? "text-[#8c8c8c]" : "text-[#4a4a4a]"}`}
          >
            <span className={`${it.d ? "pl-[25px] w-[252px]" : "pl-[28px] w-[252px]"} whitespace-nowrap`}>
              {it.u ? <U k="P" post="references..." /> : it.t}
            </span>
            <span className="whitespace-nowrap">{it.s}</span>
          </div>
        )
      )}
      <svg width="14" height="22" viewBox="0 0 14 22" className="absolute left-[139px] top-[329px]">
        <path d="M1 1V17.5L5 14L8 20.5L11 19L8.2 13L13 12.5Z" fill="#44474d" stroke="#e8e8e8" strokeWidth="0.8" />
      </svg>
    </div>
  );
}

function ScoreArea() {
  return (
    <div className="flex-1 min-w-0 flex flex-col">
      <div className="h-[34px] bg-[#e2e2e2] border-b border-[#bcbcbc] flex items-end shrink-0">
        <div className="w-[150px] h-[31px] bg-[#e9e9e9] border-r border-t border-[#bcbcbc] rounded-tr-[3px] flex items-center justify-end pr-[15px] gap-[9px] text-[13px] text-[#333] -mb-px">
          <span className="whitespace-nowrap">MusicXML_result</span>
          <svg width="11" height="11" viewBox="0 0 11 11"><path d="M1 1L10 10M10 1L1 10" stroke="#333" strokeWidth="1.5" /></svg>
        </div>
      </div>
      <div className="flex-1 min-h-0 mr-[1px] bg-[#152433] overflow-hidden flex pl-[96px] pt-[41px] gap-[16px]">
        <div className="w-[1061px] h-[800px] bg-[#fafafa] shrink-0"><PageOne /></div>
        <div className="w-[204px] h-[800px] bg-[#fafafa] shrink-0"><PageTwo /></div>
      </div>
    </div>
  );
}

export default function App() {
  return (
    <div className="w-[1720px] h-[1090px] bg-white p-[20px] overflow-hidden font-['Noto_Sans',sans-serif]">
      <div className="relative w-[1680px] h-[1050px] flex flex-col bg-[#e2e2e2] shadow-[0_1px_12px_rgba(0,0,0,0.45)] overflow-hidden">
        <TitleBar />
        <MenuBar />
        <Toolbar1 />
        <Toolbar2 />
        <div className="flex-1 min-h-0 flex">
          <Palette />
          <ScoreArea />
        </div>
        <div className="h-[25px] bg-[#e2e2e2] flex items-center justify-end pr-[2px] gap-[13px] text-[13px] text-[#4a4a4a] shrink-0">
          <span>Normal mode</span>
          <span>1:01:000</span>
        </div>
        <Menu />
      </div>
    </div>
  );
}
